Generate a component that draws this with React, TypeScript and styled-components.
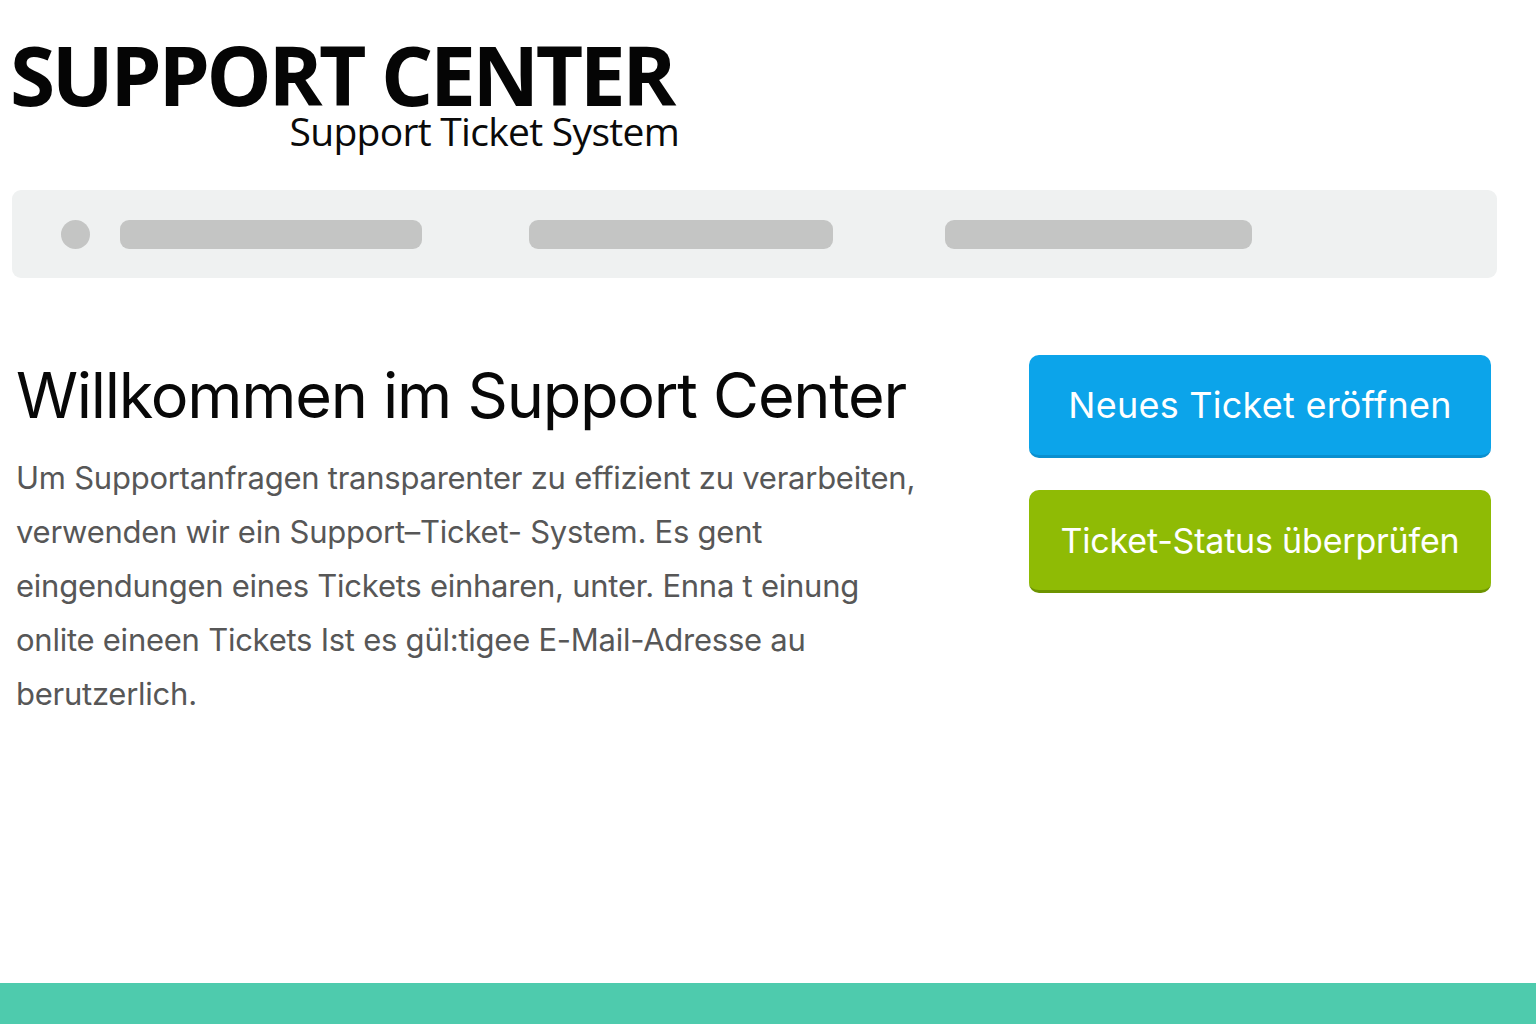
import React from "react";
import styled, { createGlobalStyle } from "styled-components";

const Global = createGlobalStyle`
  html, body { margin: 0; padding: 0; background: #ffffff; }
  body { font-family: "Inter", "Liberation Sans", sans-serif; }
`;

const Page = styled.div`
  min-height: 100vh;
  display: flex;
  flex-direction: column;
  box-sizing: border-box;
`;

const Header = styled.header`
  display: inline-flex;
  flex-direction: column;
  align-items: flex-end;
  align-self: flex-start;
  padding: 38px 0 0 10px;
`;

const Title = styled.h1`
  margin: 0;
  font-family: "Open Sans", "Noto Sans", sans-serif;
  font-weight: 700;
  font-size: 82px;
  line-height: 72px;
  letter-spacing: -3.4px;
  color: #050505;
`;

const Subtitle = styled.div`
  margin-top: 0;
  margin-right: -6px;
  font-family: "Open Sans", "Noto Sans", sans-serif;
  font-weight: 400;
  font-size: 39px;
  line-height: 42px;
  letter-spacing: -0.7px;
  color: #0a0a0a;
`;

const Nav = styled.nav`
  margin: 38px 39px 0 12px;
  height: 88px;
  background: #eff1f1;
  border-radius: 9px;
  display: flex;
  align-items: center;
  padding: 0 0 0 49px;
  box-sizing: border-box;
`;

const NavDot = styled.span`
  width: 29px;
  height: 29px;
  border-radius: 50%;
  background: #c4c5c4;
  margin-right: 30px;
`;

const NavPill = styled.span<{ $w: number; $gap: number }>`
  width: ${(p) => p.$w}px;
  height: 29px;
  border-radius: 9px;
  background: #c4c5c4;
  margin-right: ${(p) => p.$gap}px;
`;

const Main = styled.main`
  display: grid;
  grid-template-columns: 1fr 462px;
  column-gap: 40px;
  padding: 77px 45px 0 16px;
`;

const Content = styled.section`
  display: flex;
  flex-direction: column;
`;

const Heading = styled.h2`
  margin: 0;
  padding-top: 2px;
  font-family: "Inter", "Liberation Sans", sans-serif;
  font-weight: 400;
  font-size: 63px;
  line-height: 76px;
  letter-spacing: -1.25px;
  color: #080808;
`;

const Text = styled.p`
  margin: 18px 0 0;
  font-family: "Inter", "Liberation Sans", sans-serif;
  font-size: 31px;
  line-height: 54px;
  letter-spacing: -0.25px;
  color: #575757;
  white-space: nowrap;
`;

const Actions = styled.div`
  display: flex;
  flex-direction: column;
  gap: 32px;
`;

const ActionButton = styled.button<{ $bg: string; $edge: string; $size: number; $ls: number }>`
  height: 103px;
  width: 100%;
  border: none;
  border-bottom: 3px solid ${(p) => p.$edge};
  border-radius: 10px;
  background: ${(p) => p.$bg};
  color: #ffffff;
  font-family: "Inter", "Liberation Sans", sans-serif;
  font-size: ${(p) => p.$size}px;
  font-weight: 400;
  letter-spacing: ${(p) => p.$ls}px;
  cursor: pointer;
  box-sizing: border-box;
`;

const Footer = styled.footer`
  margin-top: auto;
  height: 41px;
  background: #4ecbad;
`;

export default function App() {
  return (
    <>
      <Global />
      <Page>
        <Header>
          <Title>SUPPORT CENTER</Title>
          <Subtitle>Support Ticket System</Subtitle>
        </Header>
        <Nav>
          <NavDot />
          <NavPill $w={302} $gap={107} />
          <NavPill $w={304} $gap={112} />
          <NavPill $w={307} $gap={0} />
        </Nav>
        <Main>
          <Content>
            <Heading>Willkommen im Support Center</Heading>
            <Text>
              Um Supportanfragen transparenter zu effizient zu verarbeiten,
              <br />
              verwenden wir ein Support–Ticket- System. Es gent
              <br />
              eingendungen eines Tickets einharen, unter. Enna t einung
              <br />
              onlite eineen Tickets Ist es gül:tigee E-Mail-Adresse au
              <br />
              berutzerlich.
            </Text>
          </Content>
          <Actions>
            <ActionButton $bg="#0ca4ea" $edge="#0a8fcf" $size={36} $ls={0.25}>
              Neues Ticket eröffnen
            </ActionButton>
            <ActionButton $bg="#8fbb05" $edge="#6d9400" $size={34} $ls={-0.2}>
              Ticket-Status überprüfen
            </ActionButton>
          </Actions>
        </Main>
        <Footer />
      </Page>
    </>
  );
}
